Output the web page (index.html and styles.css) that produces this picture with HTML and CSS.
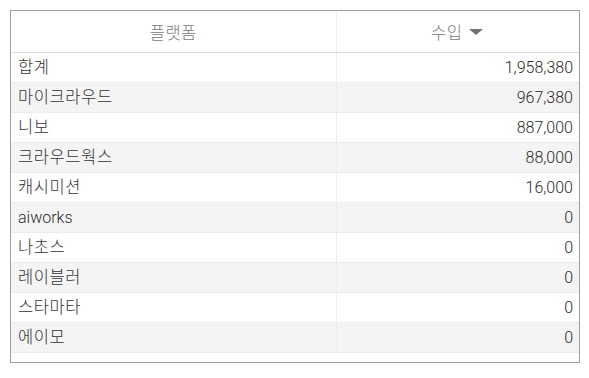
FILE: index.html
```html
<!DOCTYPE html>
<html lang="ko">
<head>
<meta charset="utf-8">
<link rel="stylesheet" href="styles.css">
</head>
<body>
<div class="panel">
  <table class="grid">
    <colgroup><col class="c-name"><col class="c-val"></colgroup>
    <thead>
      <tr>
        <th class="h-name">플랫폼</th>
        <th class="h-val"><span class="h-label">수입</span><svg class="sort" width="16" height="8" viewBox="0 0 16 8"><path d="M1 1 L15 1 L8 7 Z" fill="#6f6f6f"/></svg></th>
      </tr>
    </thead>
    <tbody>
      <tr><td class="ko">합계</td><td class="num">1,958,380</td></tr>
      <tr><td class="ko">마이크라우드</td><td class="num">967,380</td></tr>
      <tr><td class="ko">니보</td><td class="num">887,000</td></tr>
      <tr><td class="ko">크라우드웍스</td><td class="num">88,000</td></tr>
      <tr><td class="ko">캐시미션</td><td class="num">16,000</td></tr>
      <tr><td class="latin">aiworks</td><td class="num">0</td></tr>
      <tr><td class="ko">나초스</td><td class="num">0</td></tr>
      <tr><td class="ko">레이블러</td><td class="num">0</td></tr>
      <tr><td class="ko">스타마타</td><td class="num">0</td></tr>
      <tr><td class="ko">에이모</td><td class="num">0</td></tr>
    </tbody>
  </table>
</div>
</body>
</html>
```
FILE: styles.css
```css
html, body {
  margin: 0;
  padding: 0;
  background: #ffffff;
}
body {
  padding: 10px;
  font-family: Roboto, "Noto Sans CJK KR", sans-serif;
  color: #333333;
}
.panel {
  width: 568px;
  height: 351px;
  border: 1px solid #9e9e9e;
  background: #ffffff;
  overflow: hidden;
}
.grid {
  width: 568px;
  border-collapse: collapse;
  table-layout: fixed;
}
.c-name { width: 325px; }
.c-val { width: 243px; }
th {
  height: 41px;
  padding: 0;
  font-weight: 300;
  font-size: 16.5px;
  letter-spacing: 0.5px;
  color: #7a7a7a;
  text-align: center;
  border-bottom: 1px solid #dcdcdc;
  vertical-align: middle;
}
th.h-name {
  border-right: 1px solid #eeeeee;
}
.h-label {
  vertical-align: middle;
}
.sort {
  display: inline-block;
  vertical-align: middle;
  margin-left: 6px;
}
td {
  height: 29px;
  padding: 0 6px 0 7px;
  font-size: 16px;
  font-weight: 300;
  line-height: 29px;
  color: #2a2a2a;
  border-bottom: 1px solid #ebebeb;
  white-space: nowrap;
}
td.ko {
  font-size: 16.5px;
  letter-spacing: 0.6px;
  color: #333333;
}
td:first-child {
  border-right: 1px solid #eeeeee;
}
tbody tr:nth-child(even) td {
  background: #f4f4f4;
}
td.num {
  text-align: right;
}
```
